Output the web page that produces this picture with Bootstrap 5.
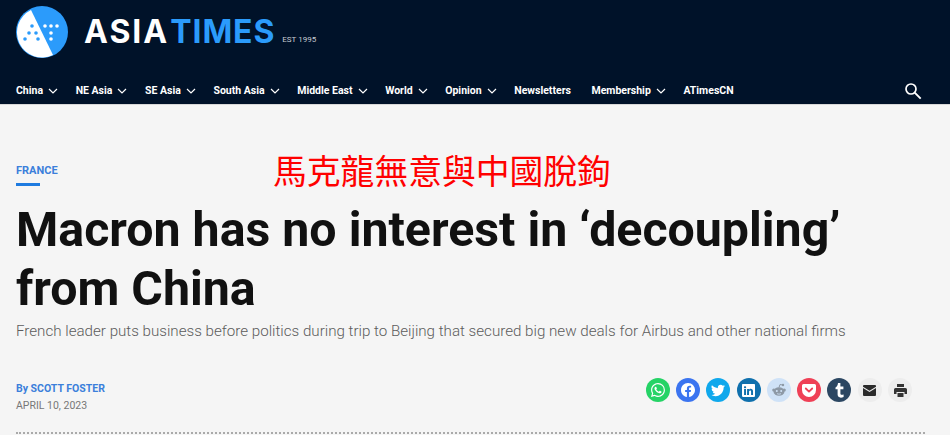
<!DOCTYPE html>
<html lang="en">
<head>
<meta charset="UTF-8" />
<title>Macron has no interest in decoupling from China</title>
<link href="https://cdn.jsdelivr.net/npm/bootstrap@5.3.0/dist/css/bootstrap.min.css" rel="stylesheet" />
<style>
  body { background: #f5f5f5; font-family: Roboto, "Liberation Sans", sans-serif; overflow: hidden; height: 435px; position: relative; }
  .site-head { background: #001229; height: 105px; padding: 6px 16px 0; border-bottom: 1px solid #d8d8d8; }
  .brand-row { height: 52px; }
  .brand-name { font-family: Inter, "Liberation Sans", sans-serif; font-weight: 700; font-size: 32px; line-height: 1; margin-left: 16px; }
  .brand-white { color: #fff; letter-spacing: 2px; }
  .brand-blue { color: #2b9bfb; margin-left: 1px; letter-spacing: .9px; }
  .brand-est { color: #c8ccd2; font-size: 8px; margin-left: 7px; margin-top: 15px; }
  .main-nav { margin-top: 21px; height: 24px; gap: 17.6px; }
  .main-nav a { color: #fff; font-size: 10.5px; font-weight: 700; text-decoration: none; display: flex; align-items: center; white-space: nowrap; }
  .main-nav svg.chev { margin-left: 5px; }
  .nav-wide { margin-right: 3px; }
  .search-ico { margin-right: 12px; }
  .story { padding: 0 16px; }
  .kicker { color: #3b7fdb; font-size: 11px; font-weight: 700; margin-top: 59px; line-height: 14px; }
  .kicker-bar { width: 24px; height: 3px; background: #1e7be0; margin-top: 5px; }
  .headline { color: #111; font-size: 48.3px; font-weight: 700; line-height: 59px; margin: 14px 0 0; white-space: nowrap; }
  .dek { color: #5c5c5c; font-size: 15.15px; font-weight: 300; line-height: 20px; margin: 3px 0 0; white-space: nowrap; }
  .byline { color: #3b7fdb; font-size: 10.5px; font-weight: 700; line-height: 14px; }
  .dateline { color: #777; font-size: 10.5px; line-height: 14px; margin-top: 3px; }
  .meta-row { margin-top: 41px; padding-right: 22px; }
  .share-row { gap: 6.3px; margin-top: -4px; }
  .share-btn { width: 24px; height: 24px; border-radius: 50%; display: flex; align-items: center; justify-content: center; }
  .sb-whatsapp { background: #25d366; }
  .sb-facebook { background: #3b74f0; }
  .sb-twitter { background: #0fa8ec; }
  .sb-linkedin { background: #0f70ad; }
  .sb-reddit { background: #cfe2f7; }
  .sb-pocket { background: #ef4056; }
  .sb-tumblr { background: #2c4762; }
  .sb-grey { background: #ededed; }
  .rule-dots { position: absolute; left: 16px; width: 909px; top: 432px; border-top: 2px dotted #aaa; }
  .cn-note { position: absolute; left: 273px; top: 149px; color: #f00; font-family: "Noto Sans CJK TC", serif; font-size: 33.8px; line-height: 42px; white-space: nowrap; }
</style>
</head>
<body>
  <header class="site-head">
    <div class="brand-row d-flex align-items-center">
      <svg width="52" height="52" viewBox="0 0 52 52">
        <circle cx="26" cy="26" r="26" fill="#2b9bfb"/>
        <path d="M15 4 L37 49 A24.500 24.500 0 0 1 15 4Z" fill="#fff"/>
        <g fill="#2b9bfb"><circle cx="16" cy="20" r="1.800"/><circle cx="20" cy="27" r="1.800"/><circle cx="13" cy="27" r="1.800"/><circle cx="9" cy="33" r="1.800"/><circle cx="22" cy="33" r="1.800"/></g>
        <g fill="#fff"><circle cx="29" cy="20" r="1.800"/><circle cx="35" cy="20" r="1.800"/><circle cx="41" cy="20" r="1.800"/><circle cx="35" cy="27" r="1.800"/><circle cx="35" cy="33" r="1.800"/></g>
      </svg>
      <div class="brand-name d-flex"><span class="brand-white">ASIA</span><span class="brand-blue">TIMES</span></div>
      <span class="brand-est">EST 1995</span>
    </div>
    <nav class="main-nav d-flex align-items-center">
      <a href="#">China<svg class="chev" width="10" height="6" viewBox="0 0 10 6"><path d="M1 1l4 4 4-4" fill="none" stroke="#fff" stroke-width="1.200"/></svg></a>
      <a href="#">NE Asia<svg class="chev" width="10" height="6" viewBox="0 0 10 6"><path d="M1 1l4 4 4-4" fill="none" stroke="#fff" stroke-width="1.200"/></svg></a>
      <a href="#">SE Asia<svg class="chev" width="10" height="6" viewBox="0 0 10 6"><path d="M1 1l4 4 4-4" fill="none" stroke="#fff" stroke-width="1.200"/></svg></a>
      <a href="#">South Asia<svg class="chev" width="10" height="6" viewBox="0 0 10 6"><path d="M1 1l4 4 4-4" fill="none" stroke="#fff" stroke-width="1.200"/></svg></a>
      <a href="#">Middle East<svg class="chev" width="10" height="6" viewBox="0 0 10 6"><path d="M1 1l4 4 4-4" fill="none" stroke="#fff" stroke-width="1.200"/></svg></a>
      <a href="#">World<svg class="chev" width="10" height="6" viewBox="0 0 10 6"><path d="M1 1l4 4 4-4" fill="none" stroke="#fff" stroke-width="1.200"/></svg></a>
      <a href="#">Opinion<svg class="chev" width="10" height="6" viewBox="0 0 10 6"><path d="M1 1l4 4 4-4" fill="none" stroke="#fff" stroke-width="1.200"/></svg></a>
      <a href="#" class="nav-wide">Newsletters</a>
      <a href="#">Membership<svg class="chev" width="10" height="6" viewBox="0 0 10 6"><path d="M1 1l4 4 4-4" fill="none" stroke="#fff" stroke-width="1.200"/></svg></a>
      <a href="#">ATimesCN</a>
      <svg class="ms-auto search-ico" width="18" height="18" viewBox="0 0 18 18"><circle cx="7" cy="7" r="5" fill="none" stroke="#fff" stroke-width="1.700"/><path d="M10.700 10.700l6 6" stroke="#fff" stroke-width="1.900"/></svg>
    </nav>
  </header>

  <main class="story">
    <div class="kicker">FRANCE</div>
    <div class="kicker-bar"></div>
    <h1 class="headline">Macron has no interest in ‘decoupling’<br>from China</h1>
    <p class="dek">French leader puts business before politics during trip to Beijing that secured big new deals for Airbus and other national firms</p>
    <div class="meta-row d-flex justify-content-between align-items-start">
      <div>
        <div class="byline">By SCOTT FOSTER</div>
        <div class="dateline">APRIL 10, 2023</div>
      </div>
      <div class="share-row d-flex">
        <span class="share-btn sb-whatsapp"><svg width="14" height="14" viewBox="0 0 16 16" fill="#fff"><path d="M13.601 2.326A7.854 7.854 0 0 0 7.994 0C3.627 0 .068 3.558.064 7.926c0 1.399.366 2.76 1.057 3.965L0 16l4.204-1.102a7.933 7.933 0 0 0 3.79.965h.004c4.368 0 7.926-3.558 7.93-7.93A7.898 7.898 0 0 0 13.6 2.326zM7.994 14.521a6.573 6.573 0 0 1-3.356-.92l-.24-.144-2.494.654.666-2.433-.156-.251a6.56 6.56 0 0 1-1.007-3.505c0-3.626 2.957-6.584 6.591-6.584a6.56 6.56 0 0 1 4.66 1.931 6.557 6.557 0 0 1 1.928 4.66c-.004 3.639-2.961 6.592-6.592 6.592zm3.615-4.934c-.197-.099-1.17-.578-1.353-.646-.182-.065-.315-.099-.445.099-.133.197-.513.646-.627.775-.114.133-.232.148-.43.05-.197-.1-.836-.308-1.592-.985-.59-.525-.985-1.175-1.103-1.372-.114-.198-.011-.304.088-.403.087-.088.197-.232.296-.346.1-.114.133-.198.198-.33.065-.134.034-.248-.015-.347-.05-.099-.445-1.076-.612-1.47-.16-.389-.323-.335-.445-.34-.114-.007-.247-.007-.38-.007a.729.729 0 0 0-.529.247c-.182.198-.691.677-.691 1.654 0 .977.71 1.916.81 2.049.098.133 1.394 2.132 3.383 2.992.47.205.84.326 1.129.418.475.152.904.129 1.246.08.38-.058 1.171-.48 1.338-.943.164-.464.164-.86.114-.943-.049-.084-.182-.133-.38-.232z"/></svg></span>
        <span class="share-btn sb-facebook"><svg width="14" height="14" viewBox="0 0 16 16" fill="#fff"><path d="M16 8.049c0-4.446-3.582-8.05-8-8.05C3.58 0-.002 3.603-.002 8.05c0 4.017 2.926 7.347 6.75 7.951v-5.625h-2.03V8.05H6.75V6.275c0-2.017 1.195-3.131 3.022-3.131.876 0 1.791.157 1.791.157v1.98h-1.009c-.993 0-1.303.621-1.303 1.258v1.51h2.218l-.354 2.326H9.25V16c3.824-.604 6.75-3.934 6.75-7.951z"/></svg></span>
        <span class="share-btn sb-twitter"><svg width="14" height="14" viewBox="0 0 16 16" fill="#fff"><path d="M5.026 15c6.038 0 9.341-5.003 9.341-9.334 0-.14 0-.282-.006-.422A6.685 6.685 0 0 0 16 3.542a6.658 6.658 0 0 1-1.889.518 3.301 3.301 0 0 0 1.447-1.817 6.533 6.533 0 0 1-2.087.793A3.286 3.286 0 0 0 7.875 6.03a9.325 9.325 0 0 1-6.767-3.429 3.289 3.289 0 0 0 1.018 4.382A3.323 3.323 0 0 1 .64 6.575v.045a3.288 3.288 0 0 0 2.632 3.218 3.203 3.203 0 0 1-.865.115 3.23 3.23 0 0 1-.614-.057 3.283 3.283 0 0 0 3.067 2.277A6.588 6.588 0 0 1 .78 13.58a6.32 6.32 0 0 1-.78-.045A9.344 9.344 0 0 0 5.026 15z"/></svg></span>
        <span class="share-btn sb-linkedin"><svg width="13" height="13" viewBox="0 0 16 16" fill="#fff"><path d="M0 1.146C0 .513.526 0 1.175 0h13.65C15.474 0 16 .513 16 1.146v13.708c0 .633-.526 1.146-1.175 1.146H1.175C.526 16 0 15.487 0 14.854V1.146zm4.943 12.248V6.169H2.542v7.225h2.401zm-1.2-8.212c.837 0 1.358-.554 1.358-1.248-.015-.709-.52-1.248-1.342-1.248-.822 0-1.359.54-1.359 1.248 0 .694.521 1.248 1.327 1.248h.016zm4.908 8.212V9.359c0-.216.016-.432.08-.586.173-.431.568-.878 1.232-.878.869 0 1.216.662 1.216 1.634v3.865h2.401V9.25c0-2.22-1.184-3.252-2.764-3.252-1.274 0-1.845.7-2.165 1.193v.025h-.016a5.54 5.54 0 0 1 .016-.025V6.169h-2.4c.03.678 0 7.225 0 7.225h2.4z"/></svg></span>
        <span class="share-btn sb-reddit"><svg width="16" height="14" viewBox="0 0 16 14"><ellipse cx="8" cy="8.500" rx="5.500" ry="4.300" fill="#8d99a6"/><circle cx="2.700" cy="7" r="1.500" fill="#8d99a6"/><circle cx="13.300" cy="7" r="1.500" fill="#8d99a6"/><circle cx="12" cy="2" r="1.200" fill="#8d99a6"/><path d="M8 4.500l1-3 3 .6" fill="none" stroke="#8d99a6"/><circle cx="5.800" cy="8" r="1" fill="#cfe2f7"/><circle cx="10.200" cy="8" r="1" fill="#cfe2f7"/><path d="M6 10.600c1.200.7 2.800.7 4 0" fill="none" stroke="#cfe2f7" stroke-width=".8"/></svg></span>
        <span class="share-btn sb-pocket"><svg width="14" height="13" viewBox="0 0 14 13"><path d="M1.500 0h11A1.500 1.500 0 0 1 14 1.500V6A7 7 0 0 1 0 6V1.500A1.500 1.500 0 0 1 1.500 0z" fill="#fff"/><path d="M3.800 4.500L7 7.600l3.200-3.100" fill="none" stroke="#ef4056" stroke-width="1.800" stroke-linecap="round" stroke-linejoin="round"/></svg></span>
        <span class="share-btn sb-tumblr"><svg width="9" height="15" viewBox="0 0 9 15"><path d="M3 0h2.400v3.600h3v2.700h-3v4.300c0 1.300 1.200 1.500 3.200.9V14c-3.300 1.500-6 .3-6-2.400V6.300H.5V4.400C2 3.900 2.800 2 3 0z" fill="#fff"/></svg></span>
        <span class="share-btn sb-grey"><svg width="13" height="11" viewBox="0 0 13 11"><path d="M1 0h11a1 1 0 0 1 1 1v.700L6.500 5.700 0 1.700V1a1 1 0 0 1 1-1zM0 3l6.500 4L13 3v7a1 1 0 0 1-1 1H1a1 1 0 0 1-1-1z" fill="#2a2a2a"/></svg></span>
        <span class="share-btn sb-grey"><svg width="13" height="13" viewBox="0 0 13 13" fill="#333"><path d="M3 0h7v3H3z"/><path d="M1.500 4h10A1.500 1.500 0 0 1 13 5.500V10h-2.500V8h-8v2H0V5.500A1.500 1.500 0 0 1 1.500 4z"/><path d="M3.500 9h6v4h-6z"/></svg></span>
      </div>
    </div>
  </main>
  <div class="rule-dots"></div>
  <div class="cn-note">馬克龍無意與中國脫鉤</div>
  <script src="https://cdn.jsdelivr.net/npm/bootstrap@5.3.0/dist/js/bootstrap.bundle.min.js"></script>
</body>
</html>
